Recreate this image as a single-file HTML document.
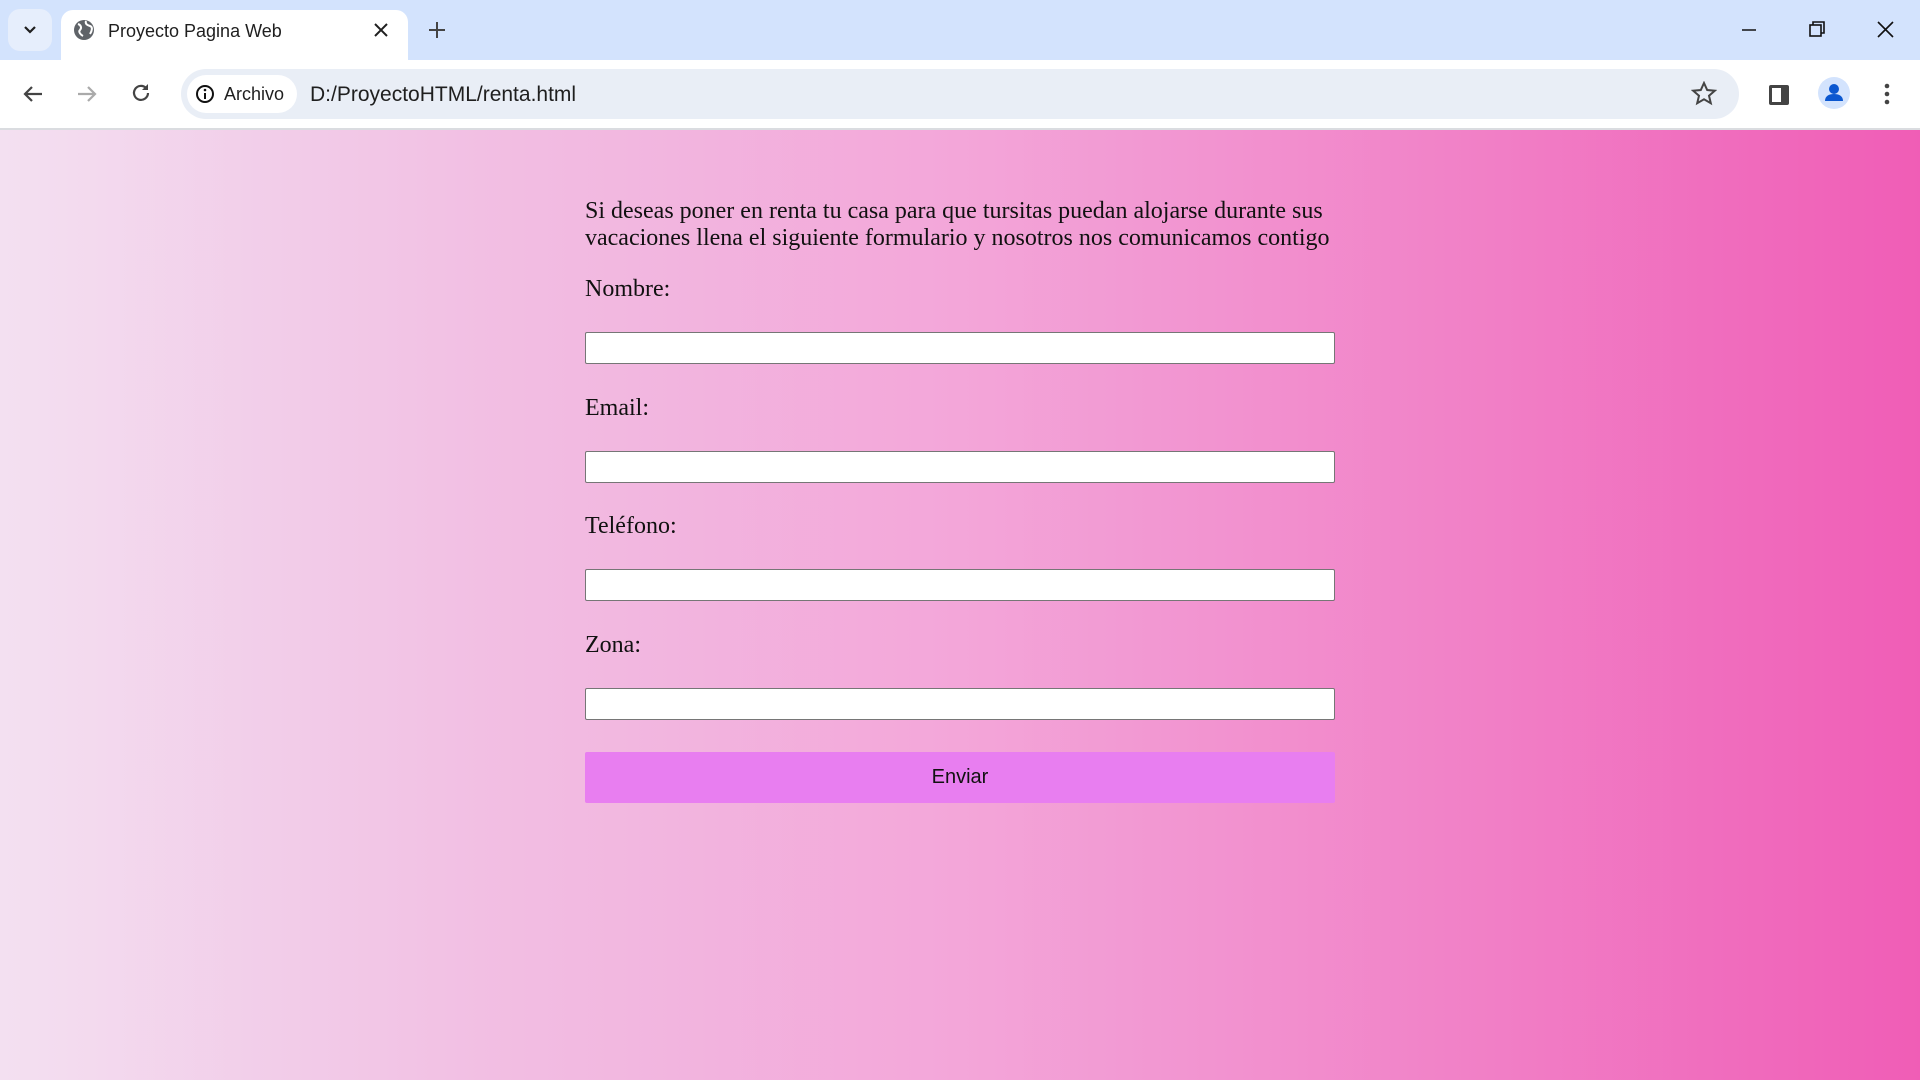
<!DOCTYPE html>
<html><head><meta charset="utf-8"><style>
*{margin:0;padding:0;box-sizing:border-box}
body{width:1920px;height:1080px;overflow:hidden;font-family:"Liberation Sans",sans-serif;background:#fff;position:relative}
.tabbar{position:absolute;top:0;left:0;width:1920px;height:60px;background:#d3e3fd}
.tab{position:absolute;left:61px;top:10px;width:347px;height:52px;background:#fff;border-radius:12px 12px 0 0}
.tab .t{position:absolute;left:47px;top:11px;font-size:18px;color:#1f1f1f}
.toolbar{position:absolute;top:60px;left:0;width:1920px;height:68px;background:#fff;border-radius:10px 10px 0 0}
.omni{position:absolute;left:181px;top:9px;width:1558px;height:50px;background:#e9eef6;border-radius:25px}
.chip{position:absolute;left:6px;top:6px;width:110px;height:38px;background:#fff;border-radius:19px;font-size:18px;color:#1f1f1f;padding:9px 0 0 37px}
.url{position:absolute;left:129px;top:14px;font-size:21px;color:#1f1f1f}
.line{position:absolute;top:128px;left:0;width:1920px;height:2px;background:#dadce0}
.page{position:absolute;top:130px;left:0;width:1920px;height:950px;background:linear-gradient(90deg,#f3e0f1 0%,#f2bfe3 25%,#f3a6d9 50%,#f183c8 75%,#f05db6 100%)}
.c{position:absolute;left:585px;width:780px;font-family:"Liberation Serif",serif;font-size:24px;color:#111}
.inp{position:absolute;left:585px;width:750px;height:32px;background:#fff;border:1px solid #767676;border-radius:2px}
.btn{position:absolute;left:585px;top:752px;width:750px;height:51px;background:#e87ef0;border-radius:2px;font-size:20px;text-align:center;line-height:51px;color:#111}
svg{position:absolute}
</style></head><body>
<div class="tabbar">
<div style="position:absolute;left:8px;top:9px;width:44px;height:42px;background:#e6eefc;border-radius:12px"></div>
<svg style="left:21px;top:22px" width="18" height="16"><path d="M4 5l5 5 5-5" stroke="#1f1f1f" stroke-width="2.2" fill="none"/></svg>
<div class="tab"><svg style="left:12px;top:9px" width="22" height="22"><circle cx="11" cy="11" r="10" fill="#5f6368"/><path d="M5 5c3 1 4 4 2 6s1 5 3 6M13 2c-1 3 1 4 4 5s2 5 0 8" stroke="#fff" stroke-width="2" fill="none"/></svg><span class="t">Proyecto Pagina Web</span>
<svg style="left:312px;top:12px" width="16" height="16"><path d="M2 2l12 12M14 2L2 14" stroke="#1f1f1f" stroke-width="2"/></svg></div>
<svg style="left:427px;top:20px" width="20" height="20"><path d="M10 2v16M2 10h16" stroke="#444" stroke-width="2"/></svg>
<svg style="left:1740px;top:20px" width="20" height="20"><path d="M2 10h14" stroke="#111" stroke-width="1.5"/></svg>
<svg style="left:1808px;top:20px" width="20" height="20"><rect x="2" y="5" width="11" height="11" fill="none" stroke="#111" stroke-width="1.6"/><path d="M5 5V2h11v11h-3" fill="none" stroke="#111" stroke-width="1.6"/></svg>
<svg style="left:1876px;top:20px" width="20" height="20"><path d="M2 2l15 15M17 2L2 17" stroke="#111" stroke-width="1.6"/></svg>
</div>
<div class="toolbar">
<svg style="left:22px;top:24px" width="22" height="20"><path d="M20 10H3M10 3L3 10l7 7" stroke="#444" stroke-width="2.2" fill="none"/></svg>
<svg style="left:76px;top:24px" width="22" height="20"><path d="M2 10h17M12 3l7 7-7 7" stroke="#aaa" stroke-width="2.2" fill="none"/></svg>
<svg style="left:130px;top:22px" width="22" height="22"><path d="M18 11a7 7 0 1 1-2-5" stroke="#444" stroke-width="2.2" fill="none"/><path d="M18 2v6h-6z" fill="#444"/></svg>
<div class="omni"><div class="chip">Archivo</div>
<svg style="left:14px;top:15px" width="20" height="20"><circle cx="10" cy="10" r="8" fill="none" stroke="#111" stroke-width="2"/><path d="M10 9v6" stroke="#111" stroke-width="2"/><circle cx="10" cy="6" r="1.3" fill="#111"/></svg>
<div class="url">D:/ProyectoHTML/renta.html</div>
<svg style="left:1510px;top:12px" width="26" height="26"><path d="M13 2l3.2 7 7.6.7-5.8 5 1.8 7.5L13 18.3 6.2 22.2 8 14.7l-5.8-5 7.6-.7z" fill="none" stroke="#444" stroke-width="2"/></svg>
</div>
<svg style="left:1768px;top:24px" width="22" height="22"><rect x="1" y="1" width="20" height="20" rx="2" fill="#444"/><rect x="4" y="4" width="9" height="14" fill="#fff"/></svg>
<div style="position:absolute;left:1818px;top:17px;width:32px;height:32px;border-radius:50%;background:#d3e3fd"></div>
<svg style="left:1818px;top:17px" width="32" height="32"><circle cx="16" cy="12" r="5" fill="#0b57d0"/><path d="M7 24c0-5 4-7 9-7s9 2 9 7z" fill="#0b57d0"/></svg>
<svg style="left:1882px;top:22px" width="10" height="26"><circle cx="5" cy="4" r="2.3" fill="#444"/><circle cx="5" cy="12" r="2.3" fill="#444"/><circle cx="5" cy="20" r="2.3" fill="#444"/></svg>
</div>
<div class="line"></div>
<div class="page"></div>
<div class="c" style="top:198px;line-height:27px">Si deseas poner en renta tu casa para que tursitas puedan alojarse durante sus vacaciones llena el siguiente formulario y nosotros nos comunicamos contigo</div>
<div class="c" style="top:276px">Nombre:</div>
<div class="inp" style="top:332px"></div>
<div class="c" style="top:395px">Email:</div>
<div class="inp" style="top:451px"></div>
<div class="c" style="top:513px">Teléfono:</div>
<div class="inp" style="top:569px"></div>
<div class="c" style="top:632px">Zona:</div>
<div class="inp" style="top:688px"></div>
<div class="btn">Enviar</div>
</body></html>
